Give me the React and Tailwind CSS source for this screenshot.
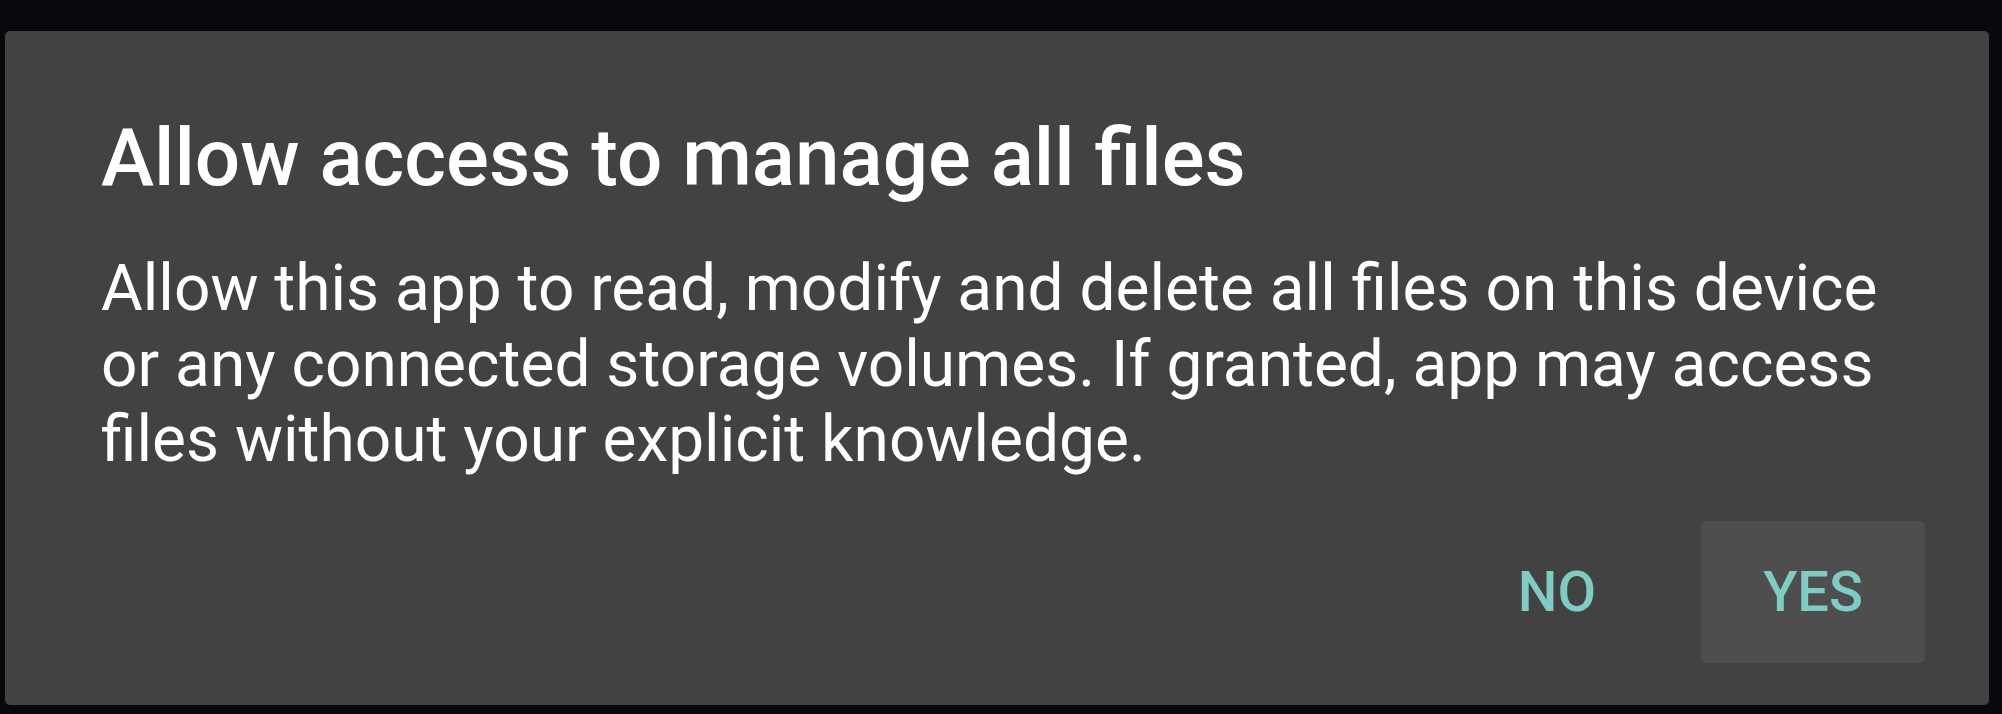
export default function App() {
  return (
    <div className="w-[2002px] h-[714px] bg-[#08090c] pt-[31px] pl-[5px] pr-[13px] font-['Roboto',sans-serif] overflow-hidden">
      <div className="h-[674px] rounded-[5px] bg-[#424242] pl-[96px] pr-[64px] pt-[82px] flex flex-col">
        <h1 className="text-[80px] leading-[90px] font-medium text-white">
          Allow access to manage all files
        </h1>
        <p className="mt-[48px] text-[64px] leading-[75.5px] text-white">
          Allow this app to read, modify and delete all files on this device or any connected storage volumes. If granted, app may access files without your explicit knowledge.
        </p>
        <div className="mt-[43px] flex justify-end gap-[43px]">
          <button className="h-[142px] px-[62px] rounded-[5px] text-[56px] font-medium text-[#80cbc4]">
            NO
          </button>
          <button className="h-[142px] w-[224px] rounded-[5px] bg-[#4e4e4e] text-[56px] font-medium text-[#80cbc4]">
            YES
          </button>
        </div>
      </div>
    </div>
  )
}
